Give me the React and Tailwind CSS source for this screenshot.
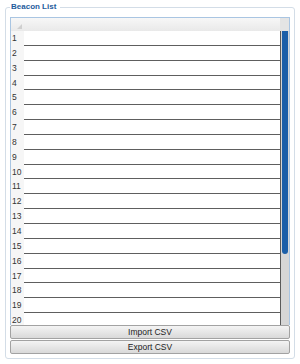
import React from 'react';

const rows = Array.from({ length: 20 }, (_, i) => i + 1);

function Corner() {
  return (
    <svg width="5" height="5" viewBox="0 0 5 5" className="absolute right-[2px] bottom-[2px]">
      <polygon points="5,0 5,5 0,5" fill="#cfcfcf" />
    </svg>
  );
}

export default function App() {
  return (
    <div className="w-[300px] h-[364px] bg-white" style={{ fontFamily: '"Liberation Sans", Arial, sans-serif' }}>
      <fieldset className="mx-[5px] mt-[1px] border border-[#d3dde7] rounded-[3px] px-[4px] pt-[4px] pb-[4px]">
        <legend className="ml-0 px-[1px] pr-[4px] text-[8px] leading-[12px] font-bold text-[#1f5c9c]">Beacon List</legend>
        <div className="flex h-[308px] overflow-hidden border-t border-x border-[#a9c5e2]">
          <div className="flex-1 flex flex-col">
            <div className="flex h-[13px] shrink-0 bg-gradient-to-b from-[#f7f7f7] to-[#e9e9e9]">
              <div className="relative w-[13px] h-full">
                <Corner />
              </div>
              <div className="flex-1" />
            </div>
            {rows.map((n) => (
              <div key={n} className="flex h-[14.85px] shrink-0">
                <div className="w-[13px] bg-[#f6f6f6] text-[8.5px] leading-[14px] text-[#333] pl-[1px]">{n}</div>
                <div className="flex-1 bg-white border-b border-[#5e5e5e]" />
              </div>
            ))}
          </div>
          <div className="w-[9px] flex flex-col">
            <div className="h-[13px] shrink-0 bg-[#e4e4e4]" />
            <div className="flex-1 bg-[#d6d6d6] border-l border-[#5a5a5a] pl-[1px] pr-[1px]">
              <div className="h-[223px] rounded-b-[3px] bg-[#1b5ea8]" />
            </div>
          </div>
        </div>
        <div className="flex flex-col gap-[1px]">
          <button className="h-[14px] w-full border border-[#a2a2a2] rounded-[2px] bg-gradient-to-b from-[#f4f4f4] to-[#d9d9d9] text-[8.5px] leading-[12px] text-[#222]">
            Import CSV
          </button>
          <button className="h-[14px] w-full border border-[#a2a2a2] rounded-[2px] bg-gradient-to-b from-[#f4f4f4] to-[#d9d9d9] text-[8.5px] leading-[12px] text-[#222]">
            Export CSV
          </button>
        </div>
      </fieldset>
    </div>
  );
}
